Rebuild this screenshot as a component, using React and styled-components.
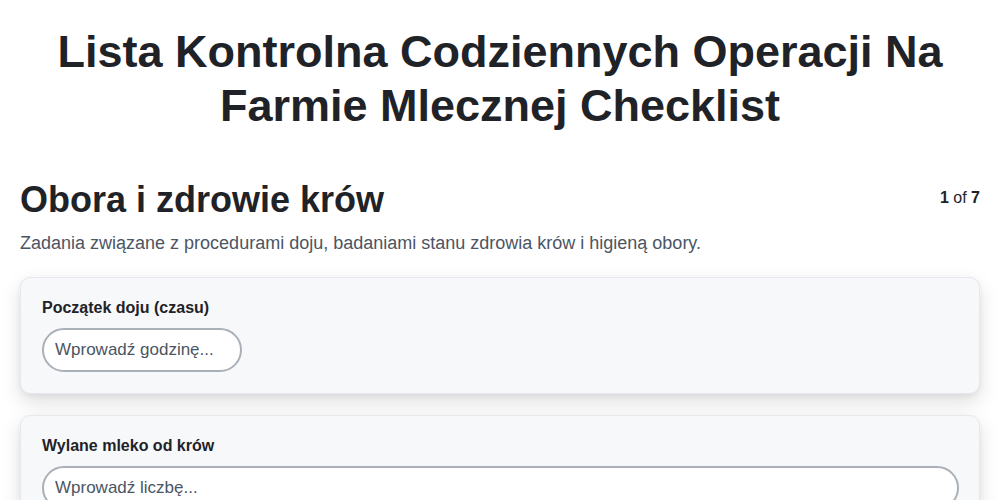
import React from "react";
import styled, { createGlobalStyle } from "styled-components";

const Global = createGlobalStyle`
  * { box-sizing: border-box; }
  body {
    margin: 0;
    background: #ffffff;
    font-family: "Liberation Sans", Arial, sans-serif;
    color: #1f2328;
  }
`;

const Page = styled.div`
  padding: 25px 20px;
`;

const Title = styled.h1`
  margin: 0 0 45px;
  text-align: center;
  font-size: 45px;
  line-height: 54px;
  font-weight: 700;
  color: #1f2328;
`;

const SectionHead = styled.div`
  display: flex;
  justify-content: space-between;
  align-items: flex-start;
`;

const SectionTitle = styled.h2`
  margin: 0;
  font-size: 36px;
  line-height: 44px;
  font-weight: 700;
  color: #1f2328;
`;

const Counter = styled.div`
  font-size: 16px;
  line-height: 20px;
  margin-top: 10px;
  color: #1f2328;
  b { font-weight: 700; }
`;

const Description = styled.p`
  margin: 9px 0 22px;
  font-size: 18px;
  line-height: 24px;
  color: #4b5563;
`;

const Cards = styled.div`
  display: flex;
  flex-direction: column;
  gap: 21px;
`;

const Card = styled.div`
  background: #f7f8fa;
  border: 1px solid #e6e8ee;
  border-radius: 10px;
  padding: 20px 20px 21px 21px;
  box-shadow: 0 8px 20px rgba(0, 0, 0, 0.13), 0 2px 5px rgba(0, 0, 0, 0.05);
`;

const Label = styled.label`
  display: block;
  font-size: 16px;
  line-height: 20px;
  font-weight: 700;
  color: #1f2328;
  margin-bottom: 10px;
`;

const Input = styled.input`
  display: block;
  width: ${(p) => (p.$full ? "100%" : "200px")};
  height: 44px;
  border: 2px solid #a9b0b8;
  border-radius: 22px;
  background: #ffffff;
  padding: 0 11px;
  font-family: "Liberation Sans", Arial, sans-serif;
  font-size: 17px;
  color: #1f2328;
  outline: none;
  &::placeholder { color: #4b5563; opacity: 1; }
`;

export default function App() {
  return (
    <>
      <Global />
      <Page>
        <Title>Lista Kontrolna Codziennych Operacji Na Farmie Mlecznej Checklist</Title>
        <SectionHead>
          <SectionTitle>Obora i zdrowie krów</SectionTitle>
          <Counter><b>1</b> of <b>7</b></Counter>
        </SectionHead>
        <Description>
          Zadania związane z procedurami doju, badaniami stanu zdrowia krów i higieną obory.
        </Description>
        <Cards>
          <Card>
            <Label>Początek doju (czasu)</Label>
            <Input placeholder="Wprowadź godzinę..." />
          </Card>
          <Card>
            <Label>Wylane mleko od krów</Label>
            <Input $full placeholder="Wprowadź liczbę..." />
          </Card>
        </Cards>
      </Page>
    </>
  );
}
